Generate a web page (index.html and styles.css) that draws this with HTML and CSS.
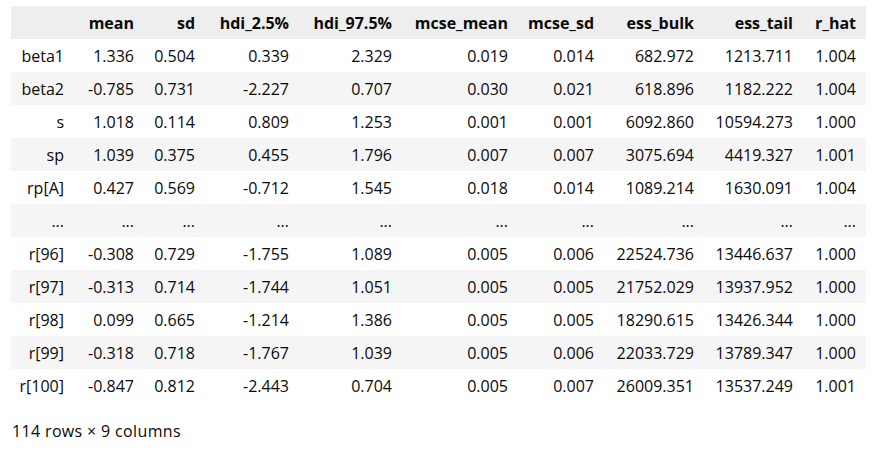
FILE: index.html
```html
<!DOCTYPE html>
<html>
<head>
<meta charset="utf-8">
<link rel="stylesheet" href="styles.css">
</head>
<body>
<div class="output">
<table class="dataframe">
<colgroup>
<col class="c-idx"><col class="c-mean"><col class="c-sd"><col class="c-h1"><col class="c-h2"><col class="c-mm"><col class="c-ms"><col class="c-eb"><col class="c-et"><col class="c-rh">
</colgroup>
<thead>
<tr><th></th><th>mean</th><th>sd</th><th>hdi_2.5%</th><th>hdi_97.5%</th><th>mcse_mean</th><th>mcse_sd</th><th>ess_bulk</th><th>ess_tail</th><th>r_hat</th></tr>
</thead>
<tbody>
<tr><th>beta1</th><td>1.336</td><td>0.504</td><td>0.339</td><td>2.329</td><td>0.019</td><td>0.014</td><td>682.972</td><td>1213.711</td><td>1.004</td></tr>
<tr><th>beta2</th><td>-0.785</td><td>0.731</td><td>-2.227</td><td>0.707</td><td>0.030</td><td>0.021</td><td>618.896</td><td>1182.222</td><td>1.004</td></tr>
<tr><th>s</th><td>1.018</td><td>0.114</td><td>0.809</td><td>1.253</td><td>0.001</td><td>0.001</td><td>6092.860</td><td>10594.273</td><td>1.000</td></tr>
<tr><th>sp</th><td>1.039</td><td>0.375</td><td>0.455</td><td>1.796</td><td>0.007</td><td>0.007</td><td>3075.694</td><td>4419.327</td><td>1.001</td></tr>
<tr><th>rp[A]</th><td>0.427</td><td>0.569</td><td>-0.712</td><td>1.545</td><td>0.018</td><td>0.014</td><td>1089.214</td><td>1630.091</td><td>1.004</td></tr>
<tr><th>...</th><td>...</td><td>...</td><td>...</td><td>...</td><td>...</td><td>...</td><td>...</td><td>...</td><td>...</td></tr>
<tr><th>r[96]</th><td>-0.308</td><td>0.729</td><td>-1.755</td><td>1.089</td><td>0.005</td><td>0.006</td><td>22524.736</td><td>13446.637</td><td>1.000</td></tr>
<tr><th>r[97]</th><td>-0.313</td><td>0.714</td><td>-1.744</td><td>1.051</td><td>0.005</td><td>0.005</td><td>21752.029</td><td>13937.952</td><td>1.000</td></tr>
<tr><th>r[98]</th><td>0.099</td><td>0.665</td><td>-1.214</td><td>1.386</td><td>0.005</td><td>0.005</td><td>18290.615</td><td>13426.344</td><td>1.000</td></tr>
<tr><th>r[99]</th><td>-0.318</td><td>0.718</td><td>-1.767</td><td>1.039</td><td>0.005</td><td>0.006</td><td>22033.729</td><td>13789.347</td><td>1.000</td></tr>
<tr><th>r[100]</th><td>-0.847</td><td>0.812</td><td>-2.443</td><td>0.704</td><td>0.005</td><td>0.007</td><td>26009.351</td><td>13537.249</td><td>1.001</td></tr>
</tbody>
</table>
<p class="shape">114 rows × 9 columns</p>
</div>
</body>
</html>
```
FILE: styles.css
```css
html, body {
  margin: 0;
  padding: 0;
  background: #ffffff;
}
body {
  font-family: "Open Sans", "Noto Sans", sans-serif;
  font-size: 16px;
  color: #0a0a0a;
}
.output {
  padding: 6px 0 0 11px;
}
.dataframe {
  border-collapse: collapse;
  border-spacing: 0;
  table-layout: fixed;
  width: 855px;
}
.c-idx { width: 63px; }
.c-mean { width: 70px; }
.c-sd { width: 61px; }
.c-h1 { width: 94px; }
.c-h2 { width: 103px; }
.c-mm { width: 116px; }
.c-ms { width: 86px; }
.c-eb { width: 100px; }
.c-et { width: 99px; }
.c-rh { width: 63px; }
.dataframe th,
.dataframe td {
  height: 33px;
  padding: 0 10px 0 0;
  text-align: right;
  white-space: nowrap;
  vertical-align: middle;
  line-height: 20px;
  box-sizing: border-box;
}
.dataframe tbody th {
  font-weight: normal;
}
.dataframe thead th {
  font-weight: bold;
  background: #eeeeee;
}
.dataframe tbody tr:nth-child(even) {
  background: #f5f5f5;
}
.shape {
  margin: 19px 0 0 1px;
  font-size: 16px;
  letter-spacing: 0.35px;
  line-height: 20px;
}
```
